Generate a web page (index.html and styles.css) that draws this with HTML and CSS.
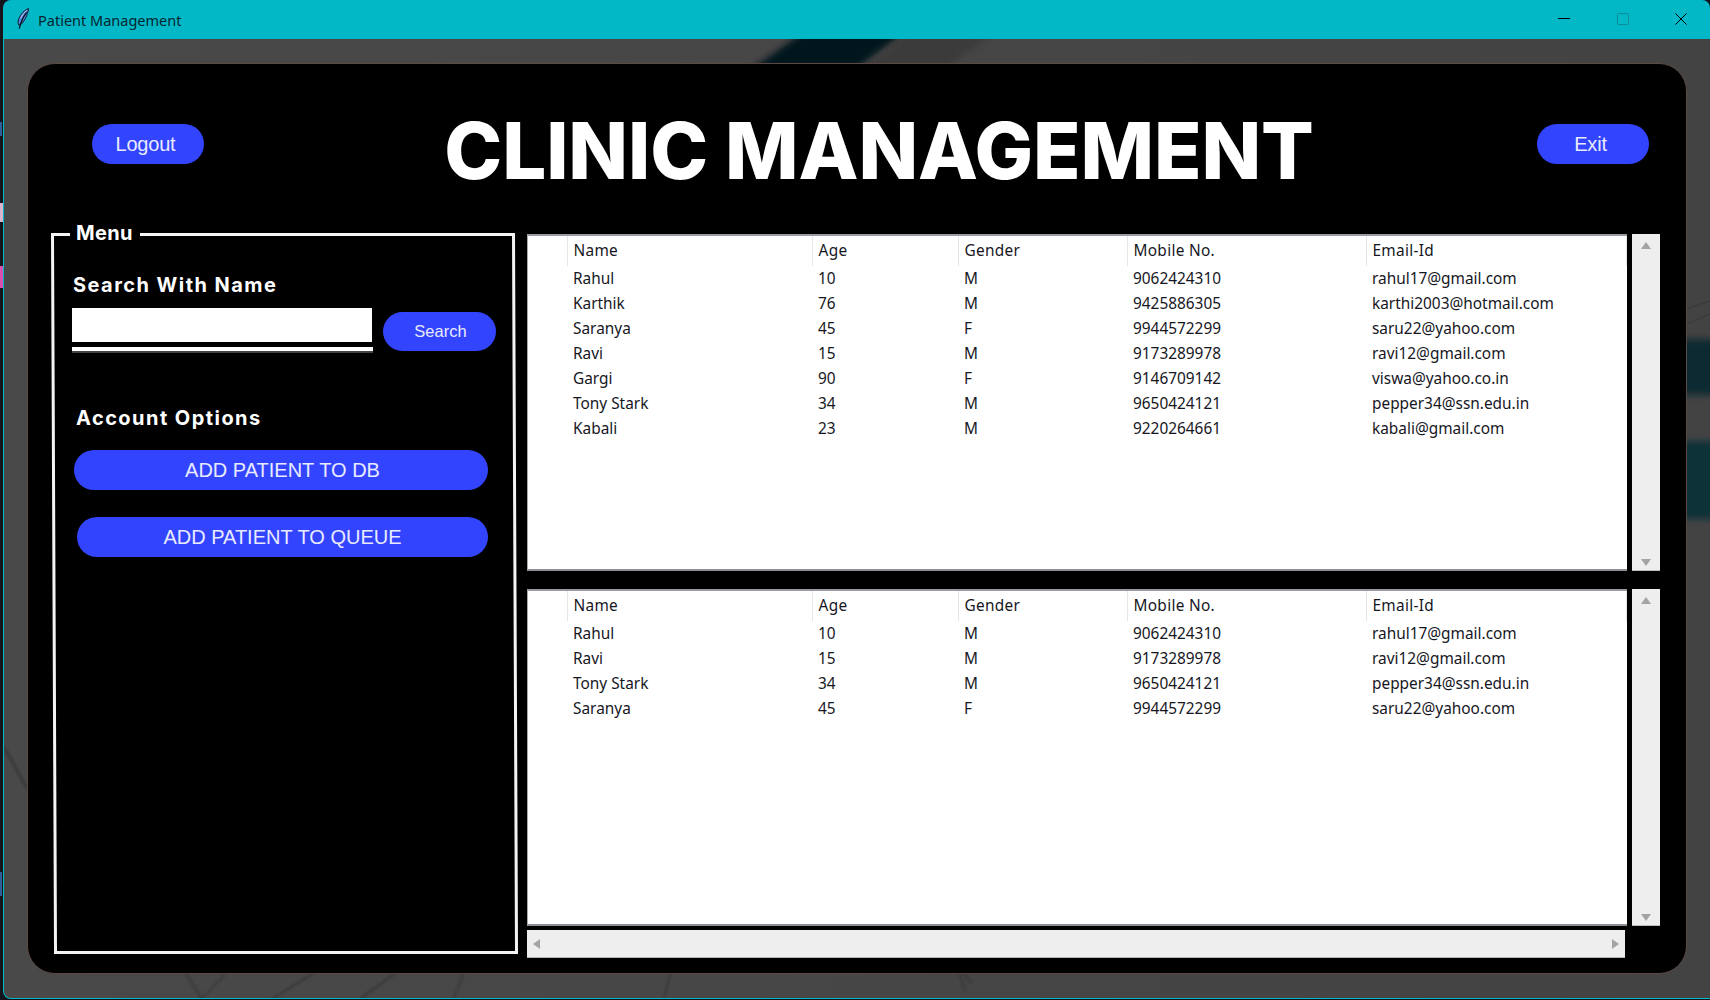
FILE: index.html
```html
<!DOCTYPE html>
<html lang="en">
<head>
<meta charset="utf-8">
<title>Patient Management</title>
<link rel="stylesheet" href="styles.css">
</head>
<body>
<div class="window">
  <header class="titlebar">
    <svg class="feather" viewBox="0 0 14 22" width="14" height="22" aria-hidden="true">
      <path d="M12.6 .6C8.8 1.8 4.6 6 2.6 11.4 1.8 13.6 2 15.6 2.8 17L5.8 15.6C8.6 12.6 11.6 7 12.6 .6Z" fill="#4f86d9" stroke="#10182a" stroke-width="1"/>
      <path d="M10.6 4.4C8 7.6 5.6 12 3.2 20.6" fill="none" stroke="#0b1020" stroke-width="1.3"/>
      <path d="M10.6 2.6C8 4.6 6 7.4 4.6 10.4" fill="none" stroke="#b4d2f5" stroke-width="1"/>
    </svg>
    <span class="window-title">Patient Management</span>
    <div class="controls">
      <svg class="ctl" viewBox="0 0 12 12" width="12" height="12" aria-hidden="true"><path d="M0 5.5H12" stroke="#000" stroke-width="1"/></svg>
      <svg class="ctl ctl-off" viewBox="0 0 12 12" width="12" height="12" aria-hidden="true"><rect x=".5" y=".5" width="11" height="11" rx="1" fill="none" stroke="#0a8c98" stroke-width="1"/></svg>
      <svg class="ctl" viewBox="0 0 12 12" width="12" height="12" aria-hidden="true"><path d="M.4 .4L11.6 11.6M11.6 .4L.4 11.6" stroke="#000" stroke-width="1"/></svg>
    </div>
  </header>
  <div class="stage">
    <svg class="backdrop" viewBox="0 0 1707 959" preserveAspectRatio="none" aria-hidden="true">
      <defs>
        <filter id="soft"><feGaussianBlur stdDeviation="3"/></filter>
        <filter id="softer"><feGaussianBlur stdDeviation="1"/></filter>
      </defs>
      <polygon points="799,-6 900,-6 852,30 748,30" fill="#02141a" filter="url(#soft)"/>
      <polygon points="905,-6 990,-6 940,30 860,30" fill="#3b3b3b" filter="url(#soft)"/>
      <rect x="1670" y="300" width="50" height="56" fill="#0f2a30" filter="url(#soft)"/>
      <rect x="1670" y="402" width="50" height="78" fill="#0a3038" filter="url(#soft)"/>
      <path d="M0 708L24 751" stroke="#2c2c2c" stroke-width="1.5" fill="none" filter="url(#softer)"/>
      <path d="M1684 270L1707 262M1684 285L1707 275" stroke="#383838" stroke-width="1" fill="none"/>
      <g stroke="#373737" stroke-width="1.6" fill="none" filter="url(#softer)">
        <path d="M182 934L198 960"/>
        <path d="M222 934L198 960"/>
        <path d="M310 934L268 960"/>
        <path d="M392 934L356 960"/>
        <path d="M460 934L450 960"/>
        <path d="M667 934L660 960"/>
        <path d="M956 934L962 952"/>
        <path d="M960 934L968 944"/>
      </g>
    </svg>
    <main class="panel">
      <div class="top">
        <button class="pill pill-top" type="button">Logout</button>
        <h1 class="brand">CLINIC MANAGEMENT</h1>
        <button class="pill pill-top" type="button">Exit</button>
      </div>
      <div class="body">
        <aside class="menu">
          <div class="menu-title">Menu</div>
          <h2 class="heading">Search With Name</h2>
          <div class="search">
            <div class="entry">
              <input class="field" type="text" aria-label="Search With Name">
              <div class="rule"></div>
            </div>
            <button class="pill pill-search" type="button">Search</button>
          </div>
          <h2 class="heading heading-account">Account Options</h2>
          <button class="pill pill-wide pill-db" type="button">ADD PATIENT TO DB</button>
          <button class="pill pill-wide pill-queue" type="button">ADD PATIENT TO QUEUE</button>
        </aside>
        <section class="tables">
          <div class="tree">
            <table>
              <colgroup><col class="c0"><col class="c1"><col class="c2"><col class="c3"><col class="c4"><col></colgroup>
              <thead><tr><th></th><th>Name</th><th>Age</th><th>Gender</th><th>Mobile No.</th><th>Email-Id</th></tr></thead>
              <tbody>
                <tr><td></td><td>Rahul</td><td>10</td><td>M</td><td>9062424310</td><td>rahul17@gmail.com</td></tr>
                <tr><td></td><td>Karthik</td><td>76</td><td>M</td><td>9425886305</td><td>karthi2003@hotmail.com</td></tr>
                <tr><td></td><td>Saranya</td><td>45</td><td>F</td><td>9944572299</td><td>saru22@yahoo.com</td></tr>
                <tr><td></td><td>Ravi</td><td>15</td><td>M</td><td>9173289978</td><td>ravi12@gmail.com</td></tr>
                <tr><td></td><td>Gargi</td><td>90</td><td>F</td><td>9146709142</td><td>viswa@yahoo.co.in</td></tr>
                <tr><td></td><td>Tony Stark</td><td>34</td><td>M</td><td>9650424121</td><td>pepper34@ssn.edu.in</td></tr>
                <tr><td></td><td>Kabali</td><td>23</td><td>M</td><td>9220264661</td><td>kabali@gmail.com</td></tr>
              </tbody>
            </table>
          </div>
          <div class="vbar"><span class="arrow arrow-up"></span><span class="arrow arrow-down"></span></div>
          <div class="tree">
            <table>
              <colgroup><col class="c0"><col class="c1"><col class="c2"><col class="c3"><col class="c4"><col></colgroup>
              <thead><tr><th></th><th>Name</th><th>Age</th><th>Gender</th><th>Mobile No.</th><th>Email-Id</th></tr></thead>
              <tbody>
                <tr><td></td><td>Rahul</td><td>10</td><td>M</td><td>9062424310</td><td>rahul17@gmail.com</td></tr>
                <tr><td></td><td>Ravi</td><td>15</td><td>M</td><td>9173289978</td><td>ravi12@gmail.com</td></tr>
                <tr><td></td><td>Tony Stark</td><td>34</td><td>M</td><td>9650424121</td><td>pepper34@ssn.edu.in</td></tr>
                <tr><td></td><td>Saranya</td><td>45</td><td>F</td><td>9944572299</td><td>saru22@yahoo.com</td></tr>
              </tbody>
            </table>
          </div>
          <div class="vbar"><span class="arrow arrow-up"></span><span class="arrow arrow-down"></span></div>
          <div class="hbar"><span class="arrow arrow-left"></span><span class="arrow arrow-right"></span></div>
        </section>
      </div>
    </main>
  </div>
</div>
</body>
</html>
```
FILE: styles.css
```css
*, *::before { box-sizing: border-box; }
html, body { margin: 0; height: 1000px; overflow: hidden; }
body {
  background-color: #14151c;
  background-image:
    linear-gradient(#d94fb0, #d94fb0),
    linear-gradient(#d8b4cf, #d8b4cf),
    linear-gradient(#2f5f96, #2f5f96),
    linear-gradient(#2f5f96, #2f5f96);
  background-repeat: no-repeat;
  background-size: 3px 22px, 3px 19px, 2px 14px, 2px 24px;
  background-position: 0 266px, 0 203px, 0 122px, 0 872px;
  font-family: "Noto Sans", sans-serif;
}
.window {
  margin-left: 3px;
  width: 1707px;
  height: 999px;
  display: flex;
  flex-direction: column;
  background: #02b8c6;
  border-radius: 8px 8px 0 8px;
  overflow: hidden;
}
.titlebar {
  height: 39px;
  flex: none;
  display: flex;
  align-items: center;
  padding-left: 13px;
  color: #06252e;
}
.feather { flex: none; margin-top: -2px; }
.window-title { margin-left: 8px; font-size: 14.5px; }
.controls { margin-left: auto; display: flex; align-items: center; gap: 46.5px; padding-right: 23px; margin-top: -1px; }
.ctl { display: block; }
.stage {
  flex: 1;
  position: relative;
  margin-left: 1px;
  margin-bottom: 1px;
  padding: 24px 20px 24px 23px;
  background: linear-gradient(90deg, #494949, #434343);
  border-radius: 0 0 0 7px;
}
.backdrop { position: absolute; inset: 0; width: 100%; height: 100%; }
.panel {
  position: relative;
  height: 911px;
  width: 1660px;
  background: #000;
  border: 1px solid #5d4a44;
  border-radius: 28px;
  padding: 60px 37px 0 23px;
}
.top {
  display: flex;
  align-items: flex-start;
  padding-left: 41px;
  margin-bottom: 42px;
}
.pill {
  display: block;
  border: 0;
  padding: 0;
  background: #3344ff;
  color: #e8ebff;
  font-family: "Liberation Sans", Arial, sans-serif;
  border-radius: 20px;
  cursor: pointer;
}
.pill-top { width: 112px; height: 40px; padding-right: 5px; font-size: 20px; letter-spacing: -.2px; flex: none; }
.brand {
  flex: 1;
  margin: -13px 0 0;
  text-align: center;
  padding-left: 17px;
  color: #fff;
  font-family: Inter, sans-serif;
  font-weight: 800;
  font-size: 78px;
  line-height: 80px;
  letter-spacing: -.1px;
  white-space: nowrap;
}
.body { display: flex; align-items: flex-start; }
.menu {
  position: relative;
  flex: none;
  width: 467px;
  height: 721px;
  padding: 40px 0 0 22px;
  color: #fff;
}
.menu::before {
  content: "";
  position: absolute;
  inset: 0 0 0 0;
  width: 464px;
  border: 3px solid #f4f4f4;
  transform: skewX(0.24deg);
  transform-origin: 0 0;
}
.menu-title {
  position: absolute;
  left: 19px;
  top: -12px;
  background: #000;
  padding: 0 7px 0 6px;
  font-family: Inter, sans-serif;
  font-weight: 700;
  font-size: 20px;
  line-height: 24px;
  letter-spacing: .3px;
}
.heading {
  position: relative;
  margin: 0;
  font-family: Inter, sans-serif;
  font-weight: 700;
  font-size: 20px;
  line-height: 24px;
  letter-spacing: 1.45px;
}
.search { position: relative; display: flex; align-items: flex-start; margin: 11px 0 0 -1px; }
.entry { width: 301px; flex: none; }
.field {
  display: block;
  width: 300px;
  height: 34px;
  border: 0;
  border-radius: 0;
  background: #fff;
  padding: 0 4px;
  font: 16px "Liberation Sans", sans-serif;
}
.rule { height: 6px; margin-top: 5px; background: #fff; border-bottom: 2px solid #444; }
.pill-search { width: 113px; height: 39px; margin: 4px 0 0 10px; padding-left: 2px; font-size: 16.5px; }
.heading-account { margin: 53px 0 0 3px; }
.pill-wide { position: relative; height: 40px; font-size: 20px; }
.pill-db { width: 414px; margin: 20px 0 0 1px; padding-left: 3px; }
.pill-queue { width: 411px; margin: 27px 0 0 4px; }
.tables {
  flex: none;
  margin: 1px 0 0 9px;
  display: grid;
  grid-template-columns: 1100px 28px;
  grid-template-rows: 337px 337px 28px;
  column-gap: 5px;
  row-gap: 18px;
}
.tree {
  background: #fff;
  border-top: 2px solid #9a9aa2;
  border-bottom: 2px solid #8e8e96;
  border-left: 1px solid #aaa;
  overflow: hidden;
}
.tree table {
  width: 1099px;
  table-layout: fixed;
  border-collapse: collapse;
  font-size: 15.4px;
  color: #16161e;
}
.c0 { width: 39px; }
.c1 { width: 245px; }
.c2 { width: 146px; }
.c3 { width: 169px; }
.c4 { width: 239px; }
th, td { padding: 0 0 0 6px; text-align: left; font-weight: 400; white-space: nowrap; }
th { height: 30px; padding-bottom: 1px; letter-spacing: .3px; border-left: 1px solid #e6e6e6; }
th:first-child { border-left: 0; }
th:last-child { border-right: 1px solid #e6e6e6; }
td { height: 25px; }
.vbar {
  background: #eee;
  border-bottom: 1px solid #bbb;
  display: flex;
  flex-direction: column;
  justify-content: space-between;
  align-items: center;
  padding: 8px 0 4px;
}
.hbar {
  grid-column: 1;
  width: 1098px;
  height: 28px;
  margin-top: -14px;
  background: #eee;
  border-bottom: 1px solid #b5b5b5;
  display: flex;
  justify-content: space-between;
  align-items: center;
  padding: 0 6px;
}
.arrow { display: block; width: 0; height: 0; border-style: solid; border-color: transparent; }
.arrow-up { border-width: 0 5px 7px; border-bottom-color: #a3a3a3; }
.arrow-down { border-width: 7px 5px 0; border-top-color: #a3a3a3; }
.arrow-left { border-width: 5px 7px 5px 0; border-right-color: #a3a3a3; }
.arrow-right { border-width: 5px 0 5px 7px; border-left-color: #a3a3a3; }
```
